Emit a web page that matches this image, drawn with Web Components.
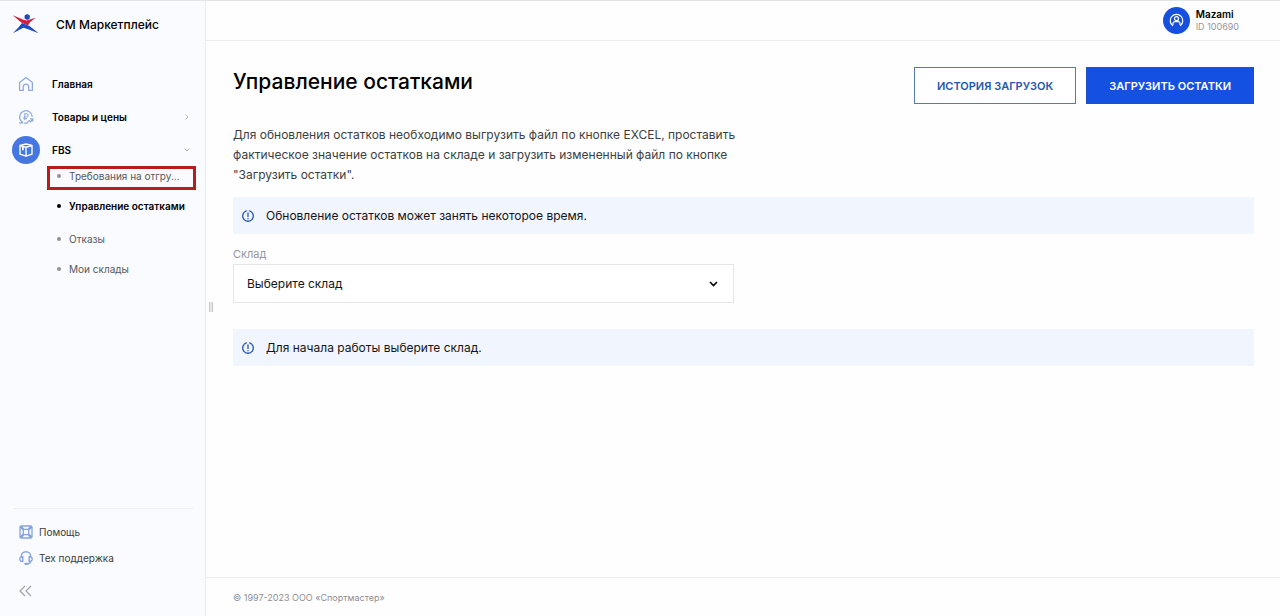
<!DOCTYPE html>
<html lang="ru">
<head>
<meta charset="utf-8">
<meta name="viewport" content="width=device-width, initial-scale=1">
<title>СМ Маркетплейс — Управление остатками</title>
<style>
  html, body { margin: 0; }
  body {
    font-family: Inter, "Noto Sans", sans-serif;
    font-size: 12px;
    color: #0c0c0f;
    background: #fefefe;
  }
</style>
</head>
<body>
<market-app>
  <side-bar slot="sidebar">
    <nav-item icon="home" href="#home">Главная</nav-item>
    <nav-item icon="price" href="#goods" arrow="right">Товары и цены</nav-item>
    <nav-item icon="box" href="#fbs" arrow="down" active>FBS</nav-item>
    <sub-menu>
      <sub-item href="#orders" marked>Требования на отгру...</sub-item>
      <sub-item href="#stock" current>Управление остатками</sub-item>
      <sub-item href="#refusals">Отказы</sub-item>
      <sub-item href="#warehouses">Мои склады</sub-item>
    </sub-menu>
    <help-link slot="bottom" icon="help" href="#help">Помощь</help-link>
    <help-link slot="bottom" icon="support" href="#support">Тех поддержка</help-link>
  </side-bar>
  <user-badge slot="header" name="Mazami" uid="ID 100690"></user-badge>
  <page-head>
    Управление остатками
    <ui-button slot="actions">ИСТОРИЯ ЗАГРУЗОК</ui-button>
    <ui-button slot="actions" primary>ЗАГРУЗИТЬ ОСТАТКИ</ui-button>
  </page-head>
  <page-intro>Для обновления остатков необходимо выгрузить файл по кнопке EXCEL, проставить фактическое значение остатков на складе и загрузить измененный файл по кнопке "Загрузить остатки".</page-intro>
  <info-note>Обновление остатков может занять некоторое время.</info-note>
  <select-field label="Склад" placeholder="Выберите склад"></select-field>
  <info-note>Для начала работы выберите склад.</info-note>
  <span slot="footer">© 1997-2023 ООО «Спортмастер»</span>
</market-app>

<script>
const ICONS = {
  home: `<svg width="16" height="16" viewBox="0 0 16 16" fill="none" stroke="#8fabdf" stroke-width="1.3" stroke-linejoin="round"><path d="M1.6 6.6 8 1.4l6.4 5.2v7.800h-3.700V10.800a2.700 2.700 0 0 0-5.400 0v3.600H1.600z"/></svg>`,
  price: `<svg width="16" height="16" viewBox="0 0 16 16" fill="none" stroke="#8fabdf" stroke-width="1.300" stroke-linecap="round"><path d="M2.600 11.400A6.300 6.300 0 1 1 14.200 7.400M1.600 13.800h3.200M2.600 11.400l2.200 2.400M6.600 14.200h2.200l2.600-2.600 1.200 1.200 2-2.600M12.400 9.800h2.400V12"/><path d="M6.800 10.800V4.800h1.800a1.600 1.600 0 0 1 0 3.200H5.800M5.800 9.600h2.600" stroke-width="1.100"/></svg>`,
  box: `<svg width="16" height="16" viewBox="0 0 16 16" fill="none" stroke="#fff" stroke-width="1.400" stroke-linejoin="round"><path d="M8 2 14 3.400v8.800L8 14.200 2 12.200V3.400zM2 3.600 8 5.200l6-1.600M8 5.200v9"/><path d="M4.900 4.400v3.800" stroke-width="1.800"/></svg>`,
  help: `<svg width="14" height="14" viewBox="0 0 14 14" fill="none" stroke="#85a4df"><rect x="1" y="1" width="12" height="12" rx="1.500" stroke-width="1.300"/><rect x="4.300" y="4.300" width="5.400" height="5.400" rx="1" stroke-width="1.300"/><path d="M1.300 1.300l3 3M12.700 1.300l-3 3M1.300 12.700l3-3M12.700 12.700l-3-3" stroke-width="2.400"/></svg>`,
  support: `<svg width="14" height="14" viewBox="0 0 14 14" fill="none" stroke="#85a4df" stroke-width="1.400" stroke-linecap="round"><path d="M2.300 6V5.400a4.700 4.700 0 0 1 9.400 0V6"/><path d="M3.800 5.800v4.600C1.800 10.600.800 9.600.800 8.100S1.800 5.600 3.800 5.800zM10.200 5.800v4.600c2 .2 3-.8 3-2.300s-1-2.500-3-2.300zM11.600 10.400c-.3 1.400-1.400 2.300-3 2.400"/><path d="M6.400 12.800h1.800" stroke-width="2.200"/></svg>`,
  right: `<svg width="6" height="8" viewBox="0 0 6 8" fill="none" stroke="#b9bcc2"><path d="M1.500 1.500l2.500 2.500-2.500 2.500"/></svg>`,
  down: `<svg width="8" height="6" viewBox="0 0 8 6" fill="none" stroke="#a9acb2"><path d="M1.500 1.500l2.500 2.500 2.500-2.500"/></svg>`
};

function define(name, render) {
  customElements.define(name, class extends HTMLElement {
    constructor() {
      super();
      this.attachShadow({ mode: 'open' });
    }
    connectedCallback() {
      const template = document.createElement('template');
      template.innerHTML = `<style>* { box-sizing: border-box; } a { color: inherit; text-decoration: none; } svg { display: block; flex: none; }</style>` + render(this);
      this.shadowRoot.replaceChildren(template.content.cloneNode(true));
    }
  });
}

define('market-app', () => `
  <style>
    :host { display: grid; grid-template-columns: 205px minmax(0, 1fr); min-height: 100vh; box-sizing: border-box; border-top: 1px solid #e3e4e6; }
    .page { display: flex; flex-direction: column; position: relative; border-left: 1px solid #ebecee; }
    header { display: flex; justify-content: flex-end; align-items: center; height: 40px; padding-right: 41px; border-bottom: 1px solid #ececee; }
    main { flex: 1; padding: 26px 26px 24px 27px; }
    footer { height: 39px; border-top: 1px solid #ececee; padding: 0 27px; display: flex; align-items: center; font-size: 9px; color: #8e8e92; }
    .grip { position: absolute; left: 3px; top: 49%; width: 4px; height: 10px; border: solid #c4c5c9; border-width: 0 1px; background: #e6e7ea; }
  </style>
  <slot name="sidebar"></slot>
  <div class="page">
    <header><slot name="header"></slot></header>
    <main><slot></slot></main>
    <footer><slot name="footer"></slot></footer>
    <div class="grip"></div>
  </div>`);

define('side-bar', () => `
  <style>
    :host { display: flex; flex-direction: column; background: #fafbfe; }
    .brand { display: flex; align-items: center; gap: 17px; height: 46px; padding-left: 12px; font-size: 12px; font-weight: 500; color: #000; }
    nav { padding-top: 20px; flex: 1; }
    .bottom { border-top: 1px solid #eeeff2; margin: 0 12px 0 13px; padding: 10px 6px 0; }
    button { display: block; border: 0; background: none; padding: 0; margin: 14px 0 19px; }
  </style>
  <a class="brand" href="#">
    <svg width="27" height="20" viewBox="0 0 27 20"><circle cx="15.200" cy="3" r="2.700" fill="#2348b5"/><path d="M.8 1.200 11.500 5.800l3 .6L23.600 3.800 18 8.300 16 11.600 9.200 8.600z" fill="#d31f3c"/><path d="M10 9 17.500 12 26.600 19.200 15.500 15 11.400 13.800.8 19.200 6.400 13.400z" fill="#1f4bbd"/></svg>
    СМ Маркетплейс
  </a>
  <nav aria-label="Разделы"><slot></slot></nav>
  <div class="bottom">
    <slot name="bottom"></slot>
    <button aria-label="Свернуть меню"><svg width="13" height="12" viewBox="0 0 13 12" fill="none" stroke="#a0a3a9" stroke-width="1.200"><path d="M6 1 1 6l5 5M12 1 7 6l5 5"/></svg></button>
  </div>`);

define('nav-item', el => `
  <style>
    :host { display: block; }
    a { display: flex; align-items: center; height: 33px; padding: 0 14px 0 12px; font-size: 10px; font-weight: 600; color: #000; }
    .icon { width: 28px; height: 28px; border-radius: 50%; display: grid; place-items: center; margin-right: 12px; }
    :host([active]) .icon { background: #4676e2; }
    .label { flex: 1; }
    .arrow { width: 8px; display: grid; place-items: center; }
  </style>
  <a href="${el.getAttribute('href')}"><span class="icon">${ICONS[el.getAttribute('icon')]}</span><span class="label"><slot></slot></span><span class="arrow">${ICONS[el.getAttribute('arrow')] || ''}</span></a>`);

define('sub-menu', () => `
  <style>:host { display: grid; gap: 10px; padding: 0 9px 0 47px; }</style>
  <slot></slot>`);

define('sub-item', el => `
  <style>
    :host { display: block; position: relative; font-size: 10px; color: #55585f; }
    :host([current]) { font-weight: 600; color: #000; padding-bottom: 3px; }
    a { display: flex; align-items: center; height: 20px; padding-left: 10px; gap: 8px; white-space: nowrap; }
    a::before { content: ""; width: 4px; height: 4px; border-radius: 50%; background: #8e9198; flex: none; }
    :host([current]) a::before { background: #000; }
    :host([marked])::after { content: ""; position: absolute; inset: 0 0 -4px; border: 3px solid #b71c1f; pointer-events: none; }
  </style>
  <a href="${el.getAttribute('href')}"><slot></slot></a>`);

define('help-link', el => `
  <style>
    :host { display: block; font-size: 10px; color: #3a3c40; }
    a { display: flex; align-items: center; gap: 6px; height: 26px; }
  </style>
  <a href="${el.getAttribute('href')}">${ICONS[el.getAttribute('icon')]}<slot></slot></a>`);

define('user-badge', el => `
  <style>
    :host { display: flex; align-items: center; gap: 6px; }
    .avatar { width: 27px; height: 27px; border-radius: 50%; background: #1650dc; display: grid; place-items: center; }
    .name { font-size: 10px; line-height: 13px; font-weight: 600; color: #000; }
    .uid { font-size: 9px; line-height: 12px; color: #97979b; }
  </style>
  <div class="avatar"><svg width="15" height="15" viewBox="0 0 15 15" fill="none" stroke="#fff" stroke-width="1.200" stroke-linecap="round"><path d="M3.600 12.600a6.300 6.300 0 1 1 7.800 0"/><circle cx="7.500" cy="5.700" r="2"/><path d="M4 11.400V10.600a2 2 0 0 1 2-2h3a2 2 0 0 1 2 2v.8"/></svg></div>
  <div><div class="name">${el.getAttribute('name')}</div><div class="uid">${el.getAttribute('uid')}</div></div>`);

define('page-head', () => `
  <style>
    :host { display: flex; justify-content: space-between; align-items: flex-start; gap: 20px; }
    h1 { margin: 0; font-size: 21px; line-height: 30px; font-weight: 500; color: #000; }
    .actions { display: flex; gap: 10px; }
  </style>
  <h1><slot></slot></h1>
  <div class="actions"><slot name="actions"></slot></div>`);

define('ui-button', el => `
  <style>
    :host { display: block; }
    button { height: 37px; padding: 0 22px; border: 1px solid #5478bd; background: #fff; color: #2856ad; font: 600 11px/16px Inter, "Noto Sans", sans-serif; white-space: nowrap; }
    :host([primary]) button { background: #1450e2; border-color: #1c50cc; color: #fff; }
  </style>
  <button type="button"><slot></slot></button>`);

define('page-intro', () => `
  <style>
    :host { display: block; }
    p { margin: 21px 0 12px; max-width: 524px; font-size: 12px; line-height: 20px; color: #3d3e42; }
  </style>
  <p><slot></slot></p>`);

define('info-note', () => `
  <style>
    :host { display: flex; align-items: center; gap: 12px; min-height: 37px; padding: 0 9px; box-sizing: border-box; background: #f1f5fe; font-size: 12px; color: #141518; }
  </style>
  <svg width="12" height="12" viewBox="0 0 12 12" fill="none" stroke="#2455b5" stroke-width="1.300" stroke-linecap="round"><path d="M4.400.900A5.300 5.300 0 1 0 7.600.900M6 3v3.600M6 8.600v.2"/></svg>
  <span><slot></slot></span>`);

define('select-field', el => `
  <style>
    :host { display: block; max-width: 501px; margin: 12px 0 26px; }
    label { display: block; font-size: 11px; line-height: 16px; color: #97979b; margin-bottom: 2px; }
    .control { display: grid; align-items: center; }
    select, svg { grid-area: 1 / 1; }
    select { appearance: none; width: 100%; height: 39px; margin: 0; padding: 0 40px 0 13px; border: 1px solid #e6e6e8; border-radius: 0; background: #fff; color: #141518; font: 12px Inter, "Noto Sans", sans-serif; }
    svg { justify-self: end; margin-right: 16px; pointer-events: none; }
  </style>
  <label for="field">${el.getAttribute('label')}</label>
  <div class="control">
    <select id="field"><option>${el.getAttribute('placeholder')}</option></select>
    <svg width="9" height="6" viewBox="0 0 9 6" fill="none" stroke="#000" stroke-width="1.600"><path d="M1 1l3.500 3.500L8 1"/></svg>
  </div>`);
</script>
</body>
</html>
